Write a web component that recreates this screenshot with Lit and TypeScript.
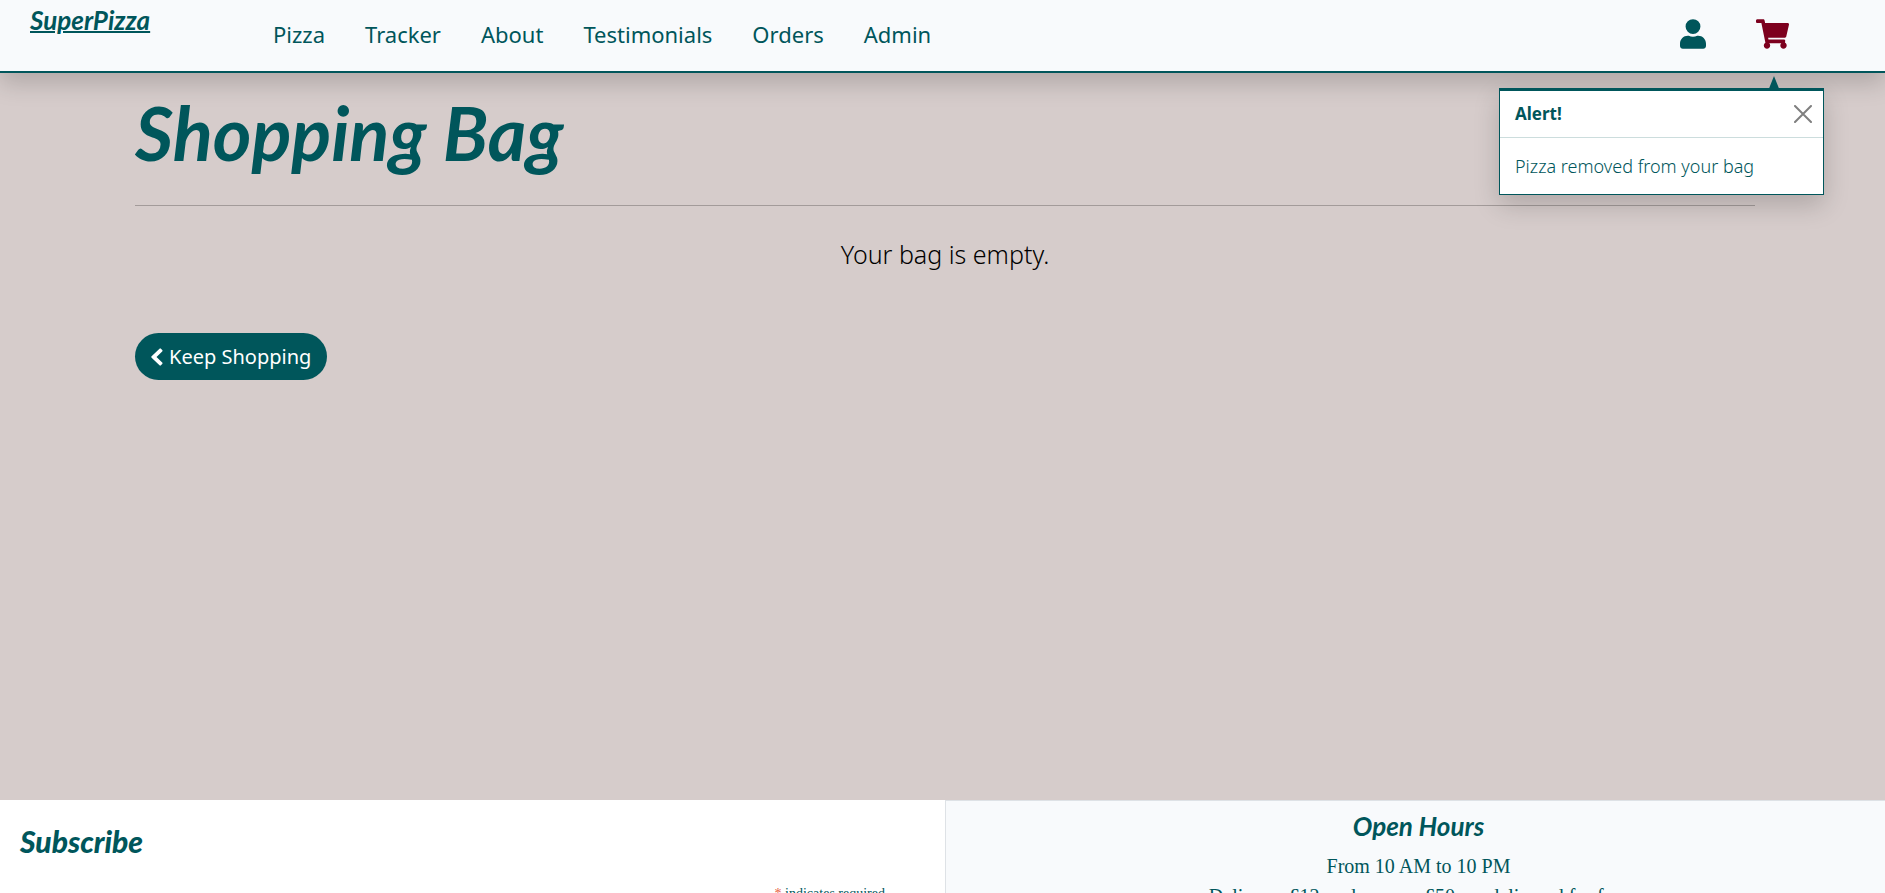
import { LitElement, html, css } from "lit";
import { customElement, state } from "lit/decorators.js";

@customElement("app-root")
export class AppRoot extends LitElement {
  @state() private alertOpen = true;

  static styles = css`
    :host {
      display: flex;
      flex-direction: column;
      height: 100vh;
      overflow: hidden;
      color: #00565b;
      background: #d6cccb;
      font-family: "Noto Sans", sans-serif;
      font-size: 17px;
      line-height: 24px;
    }
    * { box-sizing: border-box; }
    a { color: inherit; text-decoration: none; }
    h1, h2, h3, p, ul { margin: 0; padding: 0; }
    .header {
      position: relative;
      z-index: 2;
      flex: none;
      display: flex;
      align-items: center;
      height: 73px;
      padding: 0 96px 3px 30px;
      background: #f8fafc;
      border-bottom: 2px solid #00565b;
      box-shadow: 0 10px 24px rgba(0, 0, 0, 0.18);
    }
    .brand {
      align-self: flex-start;
      width: 243px;
      padding-top: 5px;
      font-family: "Lato", sans-serif;
      font-size: 26px;
      line-height: 30px;
      font-style: italic;
      font-weight: 700;
      text-decoration: underline;
      text-decoration-thickness: 2px;
    }
    .menu { display: flex; gap: 40px; list-style: none; font-size: 22px; line-height: 33px; }
    .actions { display: flex; margin-left: auto; gap: 50px; align-items: center; }
    .actions a { display: flex; }
    .actions .cart { position: relative; color: #7d001e; }
    .icon { display: block; fill: currentColor; }
    .toast {
      position: absolute;
      top: 69px;
      right: -35px;
      width: 325px;
      background: #fff;
      color: #00565b;
      border: 1px solid #00565b;
      border-top-width: 3px;
      box-shadow: 0 10px 24px rgba(0, 0, 0, 0.18);
    }
    .pointer { position: absolute; right: 43px; bottom: 100%; }
    .toast-head {
      display: flex;
      align-items: center;
      justify-content: space-between;
      padding: 11px 11px 11px 15px;
      border-bottom: 1px solid #ccdddd;
    }
    .close { display: flex; padding: 0; border: 0; background: none; color: #7f7f7f; }
    .toast-body { padding: 16px 15px; font-size: 18px; font-weight: 300; }
    .main { flex: 1; padding: 18px 130px 0 135px; }
    h1 {
      font-family: "Lato", sans-serif;
      font-style: italic;
      font-weight: 700;
      font-size: 74px;
      line-height: 84px;
    }
    hr { margin: 30px 0 29px; border: 0; border-top: 1px solid #a39b9a; }
    .empty {
      color: #000;
      font-size: 25px;
      line-height: 38px;
      font-weight: 300;
      text-align: center;
    }
    .keep {
      display: inline-flex;
      align-items: center;
      gap: 6px;
      margin-top: 60px;
      padding: 8px 16px;
      border-radius: 32px;
      background: #00565b;
      color: #fff;
      font-size: 20px;
      line-height: 31px;
    }
    .footer { flex: none; display: grid; grid-template-columns: 945fr 940fr; height: 93px; overflow: hidden; }
    .subscribe { padding: 23px 60px 0 20px; background: #fff; }
    h2 {
      font-family: "Lato", sans-serif;
      font-style: italic;
      font-weight: 900;
      font-size: 30px;
      line-height: 36px;
    }
    .required {
      margin-top: 26px;
      text-align: right;
      font-family: "Liberation Serif", serif;
      font-size: 14px;
      line-height: 18px;
    }
    .star { color: #e85c41; }
    .hours {
      padding: 8px 0 0 6px;
      background: #f8fafc;
      border: solid #dee2e6;
      border-width: 1px 0 0 1px;
      text-align: center;
      font-family: "Liberation Serif", serif;
      font-size: 20px;
      line-height: 30px;
    }
    h3 {
      margin-bottom: 8px;
      font-family: "Lato", sans-serif;
      font-style: italic;
      font-weight: 700;
      font-size: 26px;
      line-height: 34px;
    }
  `;

  render() {
    const links = ["Pizza", "Tracker", "About", "Testimonials", "Orders", "Admin"];
    return html`
      <header class="header">
        <a class="brand" href="#">SuperPizza</a>
        <nav><ul class="menu">${links.map((l) => html`<li><a href="#">${l}</a></li>`)}</ul></nav>
        <div class="actions">
          <a href="#" aria-label="Account">
            <svg class="icon" width="26" height="30" viewBox="0 0 448 512"><path d="M224 256a128 128 0 1 0 0-256 128 128 0 1 0 0 256zm89.600 32h-16.700c-22.200 10.200-46.900 16-72.900 16s-50.600-5.800-72.900-16h-16.700C60.200 288 0 348.200 0 422.400V464c0 26.500 21.500 48 48 48h352c26.500 0 48-21.500 48-48v-41.600c0-74.200-60.200-134.400-134.400-134.400z"/></svg>
          </a>
          <div class="cart">
            <a href="#" aria-label="Shopping bag">
              <svg class="icon" width="33" height="30" viewBox="0 0 576 512"><path d="M528.100 301.300l47.300-208C578.800 78.300 567.400 64 552 64H159.200l-9.200-44.800C147.800 8 137.900 0 126.500 0H24C10.700 0 0 10.700 0 24v16c0 13.300 10.700 24 24 24h69.900l70.200 343.400C147.300 417.100 136 435.200 136 456c0 30.900 25.100 56 56 56s56-25.100 56-56c0-15.700-6.400-29.800-16.800-40h209.600C430.400 426.200 424 440.300 424 456c0 30.900 25.100 56 56 56s56-25.100 56-56c0-22.200-12.900-41.300-31.600-50.400l5.500-24.300c3.400-15-8-29.300-23.400-29.300H218.100l-6.500-32h293.100c11.200 0 20.900-7.800 23.400-18.700z"/></svg>
            </a>
            ${this.alertOpen ? html`
              <section class="toast" role="alert">
                <svg class="pointer icon" width="12" height="15" viewBox="0 0 12 15"><path d="M6 0l6 15H0z"/></svg>
                <div class="toast-head">
                  <strong>Alert!</strong>
                  <button class="close" aria-label="Close" @click=${() => (this.alertOpen = false)}>
                    <svg width="18" height="18" viewBox="0 0 18 18" stroke="currentColor" stroke-width="2" stroke-linecap="round"><path d="M1 1l16 16M17 1L1 17"/></svg>
                  </button>
                </div>
                <div class="toast-body">Pizza removed from your bag</div>
              </section>` : ""}
          </div>
        </div>
      </header>
      <main class="main">
        <h1>Shopping Bag</h1>
        <hr />
        <p class="empty">Your bag is empty.</p>
        <a class="keep" href="#">
          <svg class="icon" width="12" height="18" viewBox="0 0 12 18"><path d="M8.500.700L.600 8.300a1 1 0 0 0 0 1.400l7.900 7.600a1 1 0 0 0 1.400 0l1.300-1.300a1 1 0 0 0 0-1.400L5.500 9l5.700-5.600a1 1 0 0 0 0-1.400L9.900.700a1 1 0 0 0-1.400 0z"/></svg>
          Keep Shopping
        </a>
      </main>
      <footer class="footer">
        <section class="subscribe">
          <h2>Subscribe</h2>
          <p class="required"><span class="star">*</span> indicates required</p>
        </section>
        <section class="hours">
          <h3>Open Hours</h3>
          <p>From 10 AM to 10 PM</p>
          <p>Delivery: £12, orders over £50 are delivered for free</p>
        </section>
      </footer>
    `;
  }
}
